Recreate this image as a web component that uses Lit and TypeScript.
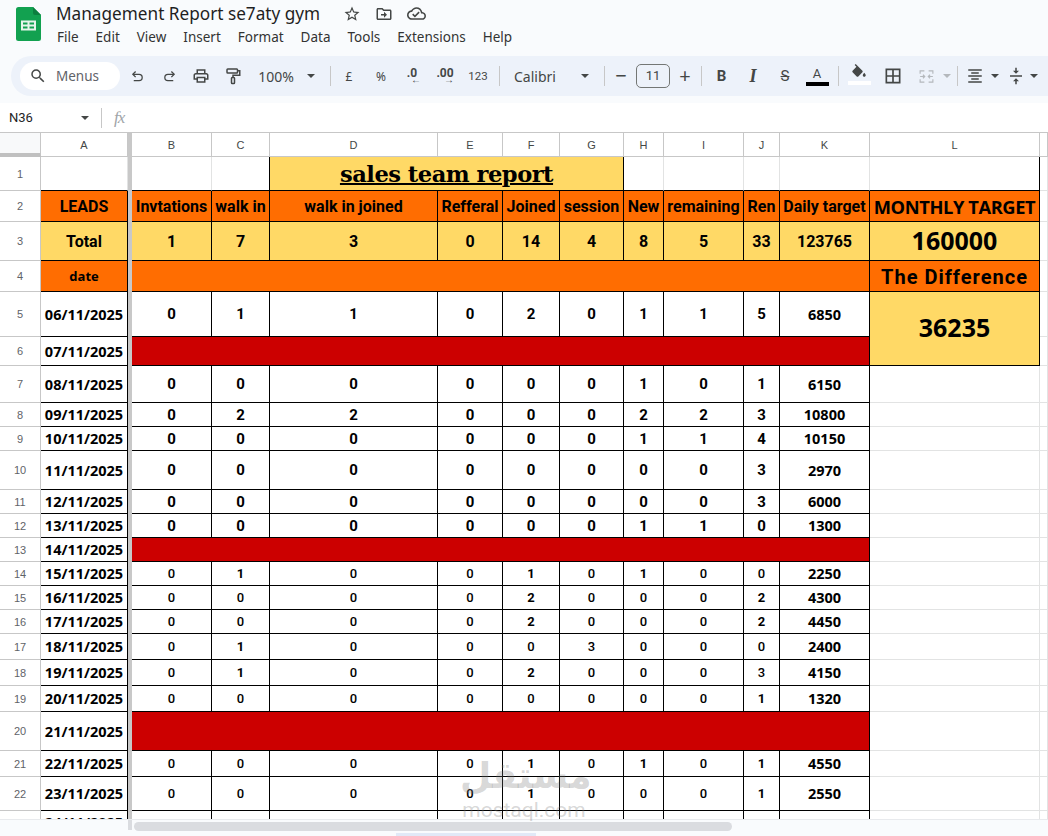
import { LitElement, html, css, svg } from 'lit';
import { customElement } from 'lit/decorators.js';

const icon = (d: unknown, size = 16, color = '#444746') => html`<svg width=${size} height=${size} viewBox="0 0 24 24" fill=${color}>${d}</svg>`;
const line = (d: unknown, size = 16, color = '#444746', sw = 2) =>
  html`<svg width=${size} height=${size} viewBox="0 0 24 24" fill="none" stroke=${color} stroke-width=${sw}>${d}</svg>`;
const caret = html`<i class="caret"></i>`;
const sep = html`<i class="sep"></i>`;

// [slot width, content] so every toolbar item lands on its own centre
const toolbarLeft: [number, unknown][] = [
  [34, line(svg`<path d="M9 4 4.500 8.500 9 13"/><path d="M5 8.500h9.500a5 5 0 0 1 0 10H6"/>`, 15)],
  [31, line(svg`<path d="M15 4l4.500 4.500L15 13"/><path d="M19 8.500H9.500a5 5 0 0 0 0 10H18"/>`, 15)],
  [32, icon(svg`<path d="M19 8h-1V3H6v5H5c-1.660 0-3 1.340-3 3v6h4v4h12v-4h4v-6c0-1.660-1.340-3-3-3zM8 5h8v3H8V5zm8 12v2H8v-4h8v2zm2-2v-2H6v2H4v-4c0-.550.450-1 1-1h14c.550 0 1 .450 1 1v4h-2z"/>`, 18)],
  [32, line(svg`<rect x="4" y="2.500" width="14" height="5.500" rx="1"/><path d="M18 5h3v6h-9v3"/><rect x="10" y="14" width="4" height="8" rx="1"/>`, 18)],
  [54, html`<span class="t zoom">100%</span>`],
  [16, caret],
  [22, sep],
  [16, html`<span class="t sm">£</span>`],
  [48, html`<span class="t sm">%</span>`],
  [14, html`<span class="dec">.0<b>←</b></span>`],
  [52, html`<span class="dec">.00<b>→</b></span>`],
  [14, html`<span class="t xs">123</span>`],
  [28, sep],
  [59, html`<span class="t font">Calibri</span>`],
  [26, caret],
  [12, sep],
  [22, html`<span class="t big">−</span>`],
  [42, html`<span class="size">11</span>`],
  [22, html`<span class="t big">+</span>`],
  [10, sep],
  [31, html`<span class="t fmt b">B</span>`],
  [32, html`<span class="t fmt it">I</span>`],
  [32, html`<span class="t fmt st">S</span>`],
  [32, html`<span class="color"><span class="t">A</span><i></i></span>`],
  [10, sep],
  [32, html`<span class="fill">${icon(svg`<path d="M16.560 8.940L7.620 0 6.210 1.410l2.380 2.380-5.150 5.150c-.590.590-.590 1.540 0 2.120l5.500 5.500c.290.290.680.440 1.060.440s.770-.150 1.060-.440l5.500-5.500c.590-.580.590-1.530 0-2.120zM19 11.500s-2 2.170-2 3.500c0 1.100.900 2 2 2s2-.900 2-2c0-1.330-2-3.500-2-3.500z"/>`, 18)}<i></i></span>`],
  [36, icon(svg`<path d="M3 3v18h18V3H3zm8 16H5v-6h6v6zm0-8H5V5h6v6zm8 8h-6v-6h6v6zm0-8h-6V5h6v6z"/>`, 20)],
  [30, line(svg`<path d="M3 8V4h6M21 8V4h-6M3 16v4h6M21 16v4h-6M3 12h6M7 9.500l2.500 2.500L7 14.500M21 12h-6M17 9.500 14.500 12l2.500 2.500"/>`, 17, '#b4b8bc', 1.6)],
  [12, html`<i class="caret off"></i>`],
  [8, sep],
  [28, icon(svg`<path d="M7 15v2h10v-2H7zm-4 6h18v-2H3v2zm0-8h18v-2H3v2zm4-6v2h10V7H7zM3 3v2h18V3H3z"/>`, 18)],
  [11, caret],
  [32, icon(svg`<path d="M8 19h3v4h2v-4h3l-4-4-4 4zm8-14h-3V1h-2v4H8l4 4 4-4zM4 11v2h16v-2H4z"/>`, 18)],
  [4, caret],
];

const menus = ['File', 'Edit', 'View', 'Insert', 'Format', 'Data', 'Tools', 'Extensions', 'Help'];
const letters = ['A', '', 'B', 'C', 'D', 'E', 'F', 'G', 'H', 'I', 'J', 'K', 'L', ''];
const colWidths = [41, 87, 4, 80, 58, 168, 65, 57, 64, 40, 80, 36, 90, 170, 8];

const heads = ['Invtations', 'walk in', 'walk in joined', 'Refferal', 'Joined', 'session', 'New', 'remaining', 'Ren', 'Daily target'];
const totals = ['1', '7', '3', '0', '14', '4', '8', '5', '33'];
const blank = ['', '', '', '', '', '', '', '', ''];

type Row = { n: number; h: number; date: string; vals?: (number | string)[]; k?: string };
const rows: Row[] = [
  { n: 5, h: 45, date: '06/11/2025', vals: [0, 1, 1, 0, 2, 0, 1, 1, 5], k: '6850' },
  { n: 6, h: 29, date: '07/11/2025' },
  { n: 7, h: 37, date: '08/11/2025', vals: [0, 0, 0, 0, 0, 0, 1, 0, 1], k: '6150' },
  { n: 8, h: 24, date: '09/11/2025', vals: [0, 2, 2, 0, 0, 0, 2, 2, 3], k: '10800' },
  { n: 9, h: 24, date: '10/11/2025', vals: [0, 0, 0, 0, 0, 0, 1, 1, 4], k: '10150' },
  { n: 10, h: 39, date: '11/11/2025', vals: [0, 0, 0, 0, 0, 0, 0, 0, 3], k: '2970' },
  { n: 11, h: 24, date: '12/11/2025', vals: [0, 0, 0, 0, 0, 0, 0, 0, 3], k: '6000' },
  { n: 12, h: 24, date: '13/11/2025', vals: [0, 0, 0, 0, 0, 0, 1, 1, 0], k: '1300' },
  { n: 13, h: 24, date: '14/11/2025' },
  { n: 14, h: 24, date: '15/11/2025', vals: [0, 1, 0, 0, 1, 0, 1, 0, 0], k: '2250' },
  { n: 15, h: 24, date: '16/11/2025', vals: [0, 0, 0, 0, 2, 0, 0, 0, 2], k: '4300' },
  { n: 16, h: 24, date: '17/11/2025', vals: [0, 0, 0, 0, 2, 0, 0, 0, 2], k: '4450' },
  { n: 17, h: 26, date: '18/11/2025', vals: [0, 1, 0, 0, 0, 3, 0, 0, 0], k: '2400' },
  { n: 18, h: 26, date: '19/11/2025', vals: [0, 1, 0, 0, 2, 0, 0, 0, 3], k: '4150' },
  { n: 19, h: 26, date: '20/11/2025', vals: [0, 0, 0, 0, 0, 0, 0, 0, 1], k: '1320' },
  { n: 20, h: 39, date: '21/11/2025' },
  { n: 21, h: 26, date: '22/11/2025', vals: [0, 0, 0, 0, 1, 0, 1, 0, 1], k: '4550' },
  { n: 22, h: 34, date: '23/11/2025', vals: [0, 0, 0, 0, 1, 0, 0, 0, 1], k: '2550' },
  { n: 23, h: 24, date: '24/11/2025', vals: blank, k: '' },
];

@customElement('app-root')
export class AppRoot extends LitElement {
  static styles = css`
    :host {
      display: flex;
      flex-direction: column;
      width: 1048px;
      height: 836px;
      overflow: hidden;
      background: #f9fbfd;
      font-family: 'Noto Sans', sans-serif;
      color: #1f1f1f;
      position: relative;
    }
    .top { display: flex; height: 49px; padding: 7px 0 0 16px; box-sizing: border-box; flex: none; }
    .logo { width: 25px; height: 34px; flex: none; }
    .titles { margin-left: 15px; display: flex; flex-direction: column; }
    .title-row { display: flex; align-items: center; height: 15px; margin-top: -1px; }
    .doc { font-size: 17.2px; line-height: 15px; width: 287px; white-space: nowrap; }
    .title-row svg { margin-right: 14px; flex: none; }
    .menus { display: flex; gap: 17px; font-size: 13.5px; line-height: 18px; margin-top: 7px; margin-left: 1px; color: #333; }
    .bar {
      flex: none;
      display: flex;
      align-items: center;
      margin: 7px 0 0 11px;
      height: 40px;
      padding-left: 9px;
      background: #edf2fa;
      border-radius: 20px 0 0 20px;
    }
    .search {
      flex: none;
      display: flex;
      align-items: center;
      width: 100px;
      height: 28px;
      box-sizing: border-box;
      padding-left: 9px;
      gap: 9px;
      background: #fff;
      border-radius: 14px;
      font-size: 13.5px;
      color: #5f6368;
    }
    .slot { flex: none; display: flex; align-items: center; justify-content: center; height: 40px; }
    .t { color: #444746; white-space: nowrap; }
    .zoom { font-size: 14px; }
    .sm { font-size: 12px; }
    .xs { font-size: 11.5px; font-family: 'Roboto', sans-serif; }
    .font { font-size: 14px; width: 100%; box-sizing: border-box; padding-left: 1px; }
    .big { font-size: 20px; line-height: 20px; }
    .dec { position: relative; font: bold 12px 'Roboto', sans-serif; color: #444746; top: -3px; }
    .dec b { position: absolute; left: 50%; top: 9px; margin-left: -1px; font-size: 10px; line-height: 10px; }
    .size {
      width: 34px;
      height: 24px;
      box-sizing: border-box;
      border: 1px solid #747775;
      border-radius: 5px;
      text-align: center;
      font: 13px/22px 'Roboto', sans-serif;
      color: #444746;
    }
    .fmt { font: bold 15px 'Roboto', sans-serif; }
    .it { font-family: 'Liberation Serif', serif; font-style: italic; font-size: 18px; }
    .st { font-weight: 400; text-decoration: line-through; }
    .color { display: flex; flex-direction: column; align-items: center; font: 13px/14px 'Roboto', sans-serif; }
    .color i { display: block; width: 23px; height: 4px; background: #000; margin-top: 1px; }
    .fill { display: flex; flex-direction: column; align-items: center; margin-top: -4px; }
    .fill i { display: block; width: 23px; height: 4px; background: #fff; margin-top: -1px; }
    .caret { display: block; width: 0; height: 0; border: 4px solid transparent; border-top: 4px solid #444746; border-bottom: 0; }
    .caret.off { border-top-color: #b4b8bc; }
    .sep { display: block; width: 1px; height: 20px; background: #c7c7c7; }
    .fx {
      flex: none;
      display: flex;
      align-items: center;
      height: 29px;
      margin-top: 7px;
      background: #fff;
      font: 13px 'Roboto', sans-serif;
      color: #1f1f1f;
    }
    .cell-ref { width: 81px; padding-left: 9px; box-sizing: border-box; flex: none; }
    .fx .caret { margin-right: 12px; }
    .fx .sep { margin-right: 12px; }
    .fx em { font: italic 17px 'Liberation Serif', serif; color: #a0a4a8; letter-spacing: -1px; }
    .grid { flex: 1; min-height: 0; overflow: hidden; background: #fff; border-top: 1px solid #c7c7c7; }
    table { border-collapse: separate; border-spacing: 0; table-layout: fixed; width: 1048px; }
    td, th {
      padding: 0;
      border-right: 1px solid #000;
      border-bottom: 1px solid #000;
      text-align: center;
      overflow: hidden;
      white-space: nowrap;
      box-sizing: border-box;
      font: bold 15px 'Roboto', sans-serif;
      color: #000;
    }
    td.head { font-size: 16px; }
    tr.cols th {
      height: 24px;
      font: 400 11px 'Liberation Sans', sans-serif;
      color: #444746;
      border-right: 1px solid #c7c7c7;
      border-bottom: 1px solid #c7c7c7;
      background: #fff;
    }
    tr.cols th.corner { background: #f8f9fa; border-bottom: 4px solid #c0c0c0; }
    th.num {
      font: 400 11px 'Liberation Sans', sans-serif;
      color: #5f6368;
      border-right: 1px solid #c7c7c7;
      border-bottom: 1px solid #c7c7c7;
      background: #fff;
    }
    td.frz, tr.cols th.frz { background: #c8c8c8; border: 0; }
    td.soft { border-right-color: #e2e3e3; border-bottom-color: #e2e3e3; }
    td.softb { border-bottom-color: #000; border-right-color: #e2e3e3; }
    td.rb { border-right-color: #000; border-bottom-color: #000; }
    td.end { border-right-color: #000; border-bottom-color: #000; }
    td.orange { background: #ff6d01; }
    td.yellow { background: #ffd966; }
    td.red { background: #cc0000; }
    td.title {
      font: bold 22.6px 'DejaVu Serif', serif;
      text-decoration: underline;
      text-decoration-thickness: 2px;
      letter-spacing: -0.5px;
    }
    td.date { font: bold 14.5px 'Open Sans', sans-serif; }
    td.date.small { font-size: 13px; }
    td.k { font: bold 14.5px 'Open Sans', sans-serif; }
    td.k.total { font: bold 16px 'Roboto', sans-serif; }
    td.low { font-size: 13px; }
    td.low.thin { font-weight: 500; }
    td.mt { font: bold 18.3px 'Open Sans', sans-serif; letter-spacing: -0.4px; }
    td.big-n { font: bold 25px 'Open Sans', sans-serif; }
    td.big-n.lift { padding-bottom: 3px; }
    td.diff { font: bold 20px 'Roboto', sans-serif; letter-spacing: 1px; padding-top: 2px; }
    .hbar { flex: none; height: 17px; background: #f9fbfd; position: relative; border-top: 1px solid #e8eaed; box-sizing: border-box; }
    .thumb { position: absolute; left: 134px; top: 2px; width: 598px; height: 9px; border-radius: 5px; background: #dadce0; }
    .freeze-stub { position: absolute; left: 128px; top: 0; width: 4px; height: 10px; background: #dadce0; }
    .tab { position: absolute; left: 396px; top: 13px; width: 140px; height: 4px; background: #e1e9f7; }
    .mark {
      position: absolute;
      left: 460px;
      top: 752px;
      width: 128px;
      text-align: center;
      color: rgba(120, 120, 120, 0.3);
      pointer-events: none;
    }
    .mark b { display: block; font: bold 36px/48px 'DejaVu Sans', sans-serif; }
    .mark span { display: block; font: 21px/20px 'Roboto', sans-serif; }
  `;

  private _gap(extra = 'soft') {
    return html`<td class=${extra}></td>`;
  }

  private _num(n: number, h: number) {
    return html`<th class="num" style="height:${h}px">${n}</th>`;
  }

  private _rowCells(r: Row) {
    if (!r.vals) return html`<td class="red" colspan="10"></td>`;
    return html`${r.vals.map((v) => {
      if (r.n < 14) return html`<td>${v}</td>`;
      return html`<td class=${v === 0 || v === 3 ? 'low thin' : 'low'}>${v}</td>`;
    })}<td class="k">${r.k}</td>`;
  }

  render() {
    return html`
      <div class="top">
        <svg class="logo" viewBox="0 0 25 34">
          <path d="M2.500 0H17l8 8v23.500a2.500 2.500 0 0 1-2.500 2.500h-20A2.500 2.500 0 0 1 0 31.500v-29A2.500 2.500 0 0 1 2.500 0z" fill="#12a150"/>
          <path d="M17 0l8 8h-6a2 2 0 0 1-2-2z" fill="#0c7f3f"/>
          <path d="M5 13.500h15v10H5zm2 2v2h4.500v-2zm6.500 0v2H18v-2zM7 19.500v2h4.500v-2zm6.500 0v2H18v-2z" fill="#e6f4ea" fill-rule="evenodd"/>
        </svg>
        <div class="titles">
          <div class="title-row">
            <span class="doc">Management Report se7aty gym</span>
            ${icon(svg`<path d="M22 9.240l-7.190-.620L12 2 9.190 8.630 2 9.240l5.460 4.730L5.820 21 12 17.270 18.180 21l-1.630-7.030L22 9.240zM12 15.400l-3.760 2.270 1-4.280-3.320-2.880 4.380-.380L12 6.100l1.710 4.040 4.380.380-3.320 2.880 1 4.280L12 15.400z"/>`, 18)}
            ${icon(svg`<path d="M20 6h-8l-2-2H4c-1.100 0-2 .900-2 2v12c0 1.100.900 2 2 2h16c1.100 0 2-.900 2-2V8c0-1.100-.900-2-2-2zm0 12H4V6h5.170l2 2H20v10zm-8-1l4-4-4-4v3H8v2h4z"/>`, 18)}
            ${icon(svg`<path d="M19.350 10.040C18.670 6.590 15.640 4 12 4 9.110 4 6.600 5.640 5.350 8.040 2.340 8.360 0 10.910 0 14c0 3.310 2.690 6 6 6h13c2.760 0 5-2.240 5-5 0-2.640-2.050-4.780-4.650-4.960zM19 18H6c-2.210 0-4-1.790-4-4 0-2.050 1.530-3.760 3.560-3.970l1.070-.110.500-.950C8.080 7.140 9.940 6 12 6c2.620 0 4.880 1.860 5.390 4.430l.300 1.500 1.530.110c1.560.100 2.780 1.410 2.780 2.960 0 1.650-1.350 3-3 3zm-9-3.820l-2.090-2.090L6.500 13.500 10 17l6.010-6.010-1.410-1.410z"/>`, 19)}
          </div>
          <div class="menus">${menus.map((m) => html`<span>${m}</span>`)}</div>
        </div>
      </div>

      <div class="bar">
        <div class="search">
          ${icon(svg`<path d="M15.500 14h-.790l-.280-.270A6.471 6.471 0 0 0 16 9.500 6.500 6.500 0 1 0 9.500 16c1.610 0 3.090-.590 4.230-1.570l.270.280v.790l5 4.990L20.490 19l-4.990-5zm-6 0C7.010 14 5 11.990 5 9.500S7.010 5 9.500 5 14 7.010 14 9.500 11.990 14 9.500 14z"/>`, 18)}
          <span>Menus</span>
        </div>
        ${toolbarLeft.map(([w, c]) => html`<span class="slot" style="width:${w}px">${c}</span>`)}
      </div>

      <div class="fx">
        <span class="cell-ref">N36</span>
        ${caret}
        ${sep}
        <em>fx</em>
      </div>

      <div class="grid">
        <table>
          <colgroup>${colWidths.map((w) => html`<col style="width:${w}px" />`)}</colgroup>
          <tr class="cols">
            <th class="corner"></th>
            ${letters.map((l, i) => (i === 1 ? html`<th class="frz"></th>` : html`<th>${l}</th>`))}
          </tr>
          <tr>
            ${this._num(1, 34)}
            <td class="softb"></td><td class="frz"></td><td class="softb"></td><td class="rb"></td>
            <td class="yellow title" colspan="4">sales team report</td>
            <td class="softb"></td><td class="softb"></td><td class="softb"></td><td class="softb"></td><td class="end"></td>${this._gap()}
          </tr>
          <tr>
            ${this._num(2, 31)}
            <td class="orange head">LEADS</td><td class="frz"></td>
            ${heads.map((h) => html`<td class="orange head">${h}</td>`)}
            <td class="orange mt">MONTHLY TARGET</td>${this._gap()}
          </tr>
          <tr>
            ${this._num(3, 39)}
            <td class="yellow head">Total</td><td class="frz"></td>
            ${totals.map((v) => html`<td class="yellow head">${v}</td>`)}
            <td class="yellow k total">123765</td>
            <td class="yellow big-n lift">160000</td>${this._gap()}
          </tr>
          <tr>
            ${this._num(4, 31)}
            <td class="orange date small">date</td><td class="frz"></td>
            <td class="orange" colspan="10"></td>
            <td class="orange diff">The Difference</td>${this._gap()}
          </tr>
          ${rows.map(
            (r) => html`<tr>
              ${this._num(r.n, r.h)}
              <td class="date">${r.date}</td><td class="frz"></td>
              ${this._rowCells(r)}
              ${r.n === 5
                ? html`<td class="yellow big-n lift" rowspan="2">36235</td>`
                : r.n === 6
                  ? ''
                  : this._gap()}
              ${this._gap()}
            </tr>`,
          )}
        </table>
      </div>

      <div class="hbar">
        <i class="freeze-stub"></i>
        <i class="thumb"></i>
        <i class="tab"></i>
      </div>

      <div class="mark"><b>مستقل</b><span>mostaql.com</span></div>
    `;
  }
}
